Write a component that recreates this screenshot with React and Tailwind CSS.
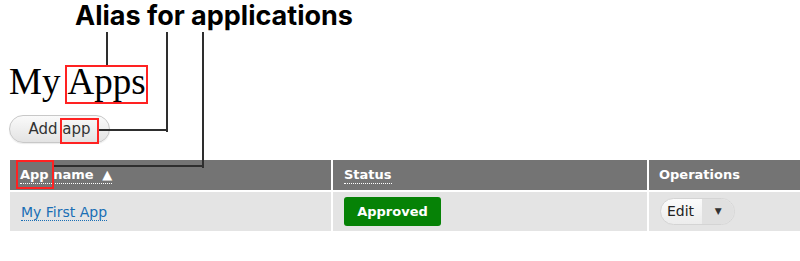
import React from 'react';

const tableFont = { fontFamily: '"DejaVu Sans", "Lucida Grande", sans-serif' };

function Line({ className }) {
  return <div className={`absolute bg-[#2e2e2e] ${className}`} />;
}

function RedBox({ className }) {
  return <div className={`absolute border-2 border-[#f22] ${className}`} />;
}

export default function App() {
  return (
    <div className="relative w-[800px] h-[261px] bg-white overflow-hidden">
      {/* annotation caption */}
      <div className="h-[32px] pl-[75px] pt-[1px] text-[27px] leading-[30px] font-bold text-black" style={{ fontFamily: 'Inter, Roboto, sans-serif' }}>
        Alias for applications
      </div>

      <h1 className="pl-[9px] mt-[30px] text-[37px] leading-[40px] text-black" style={{ fontFamily: '"Liberation Serif", "DejaVu Serif", serif' }}>
        My Apps
      </h1>

      <div className="pl-[9px] mt-[13px]" style={tableFont}>
        <button className="h-[28px] w-[101px] rounded-full border border-[#c8c8c8] bg-gradient-to-b from-[#fafafa] to-[#e3e3e3] text-[15px] text-[#333] shadow-[0_1px_1px_rgba(0,0,0,0.08)]">
          Add app
        </button>
      </div>

      <table className="ml-[10px] mt-[17px] w-[790px] border-collapse" style={tableFont}>
        <thead>
          <tr className="bg-[#747474] text-white text-[13px] font-bold h-[31px]">
            <th className="w-[322px] text-left pl-[10px] border-r-2 border-white align-middle">
              <span className="border-b border-dotted border-white pb-[1px]">App name <span className="text-[13px] pl-[4px]">▲</span></span>
            </th>
            <th className="w-[316px] text-left pl-[11px] border-r-2 border-white align-middle">
              <span className="border-b border-dotted border-white pb-[1px]">Status</span>
            </th>
            <th className="text-left pl-[10px] align-middle">Operations</th>
          </tr>
        </thead>
        <tbody>
          <tr className="bg-[#e4e4e4] h-[40px] border-t-2 border-white">
            <td className="pl-[11px] border-r-2 border-white align-middle">
              <a className="text-[14px] text-[#1a6fb5] border-b border-dotted border-[#1a6fb5]">My First App</a>
            </td>
            <td className="pl-[11px] border-r-2 border-white align-middle">
              <span className="inline-flex items-center justify-center w-[97px] h-[29px] rounded-[3px] bg-[#068206] text-white text-[13px] font-bold">
                Approved
              </span>
            </td>
            <td className="pl-[11px] align-middle">
              <span className="inline-flex items-center h-[27px] rounded-full border border-[#d4d4d4] bg-gradient-to-b from-[#fbfbfb] to-[#ececec] text-[14px] text-[#222] overflow-hidden">
                <span className="pl-[6px] pr-[8px]">Edit</span>
                <span className="h-full w-[32px] flex items-center justify-center bg-[#e0e0e0] text-[9px] text-[#333]">▼</span>
              </span>
            </td>
          </tr>
        </tbody>
      </table>

      {/* annotation overlay */}
      <RedBox className="left-[65px] top-[65px] w-[83px] h-[39px]" />
      <RedBox className="left-[60px] top-[118px] w-[39px] h-[26px]" />
      <RedBox className="left-[16px] top-[160px] w-[38px] h-[29px]" />

      <Line className="left-[106px] top-[32px] w-[2px] h-[33px]" />
      <Line className="left-[166px] top-[32px] w-[2px] h-[100px]" />
      <Line className="left-[99px] top-[129px] w-[69px] h-[2px]" />
      <Line className="left-[202px] top-[32px] w-[2px] h-[136px]" />
      <Line className="left-[54px] top-[165px] w-[150px] h-[2px]" />
    </div>
  );
}
